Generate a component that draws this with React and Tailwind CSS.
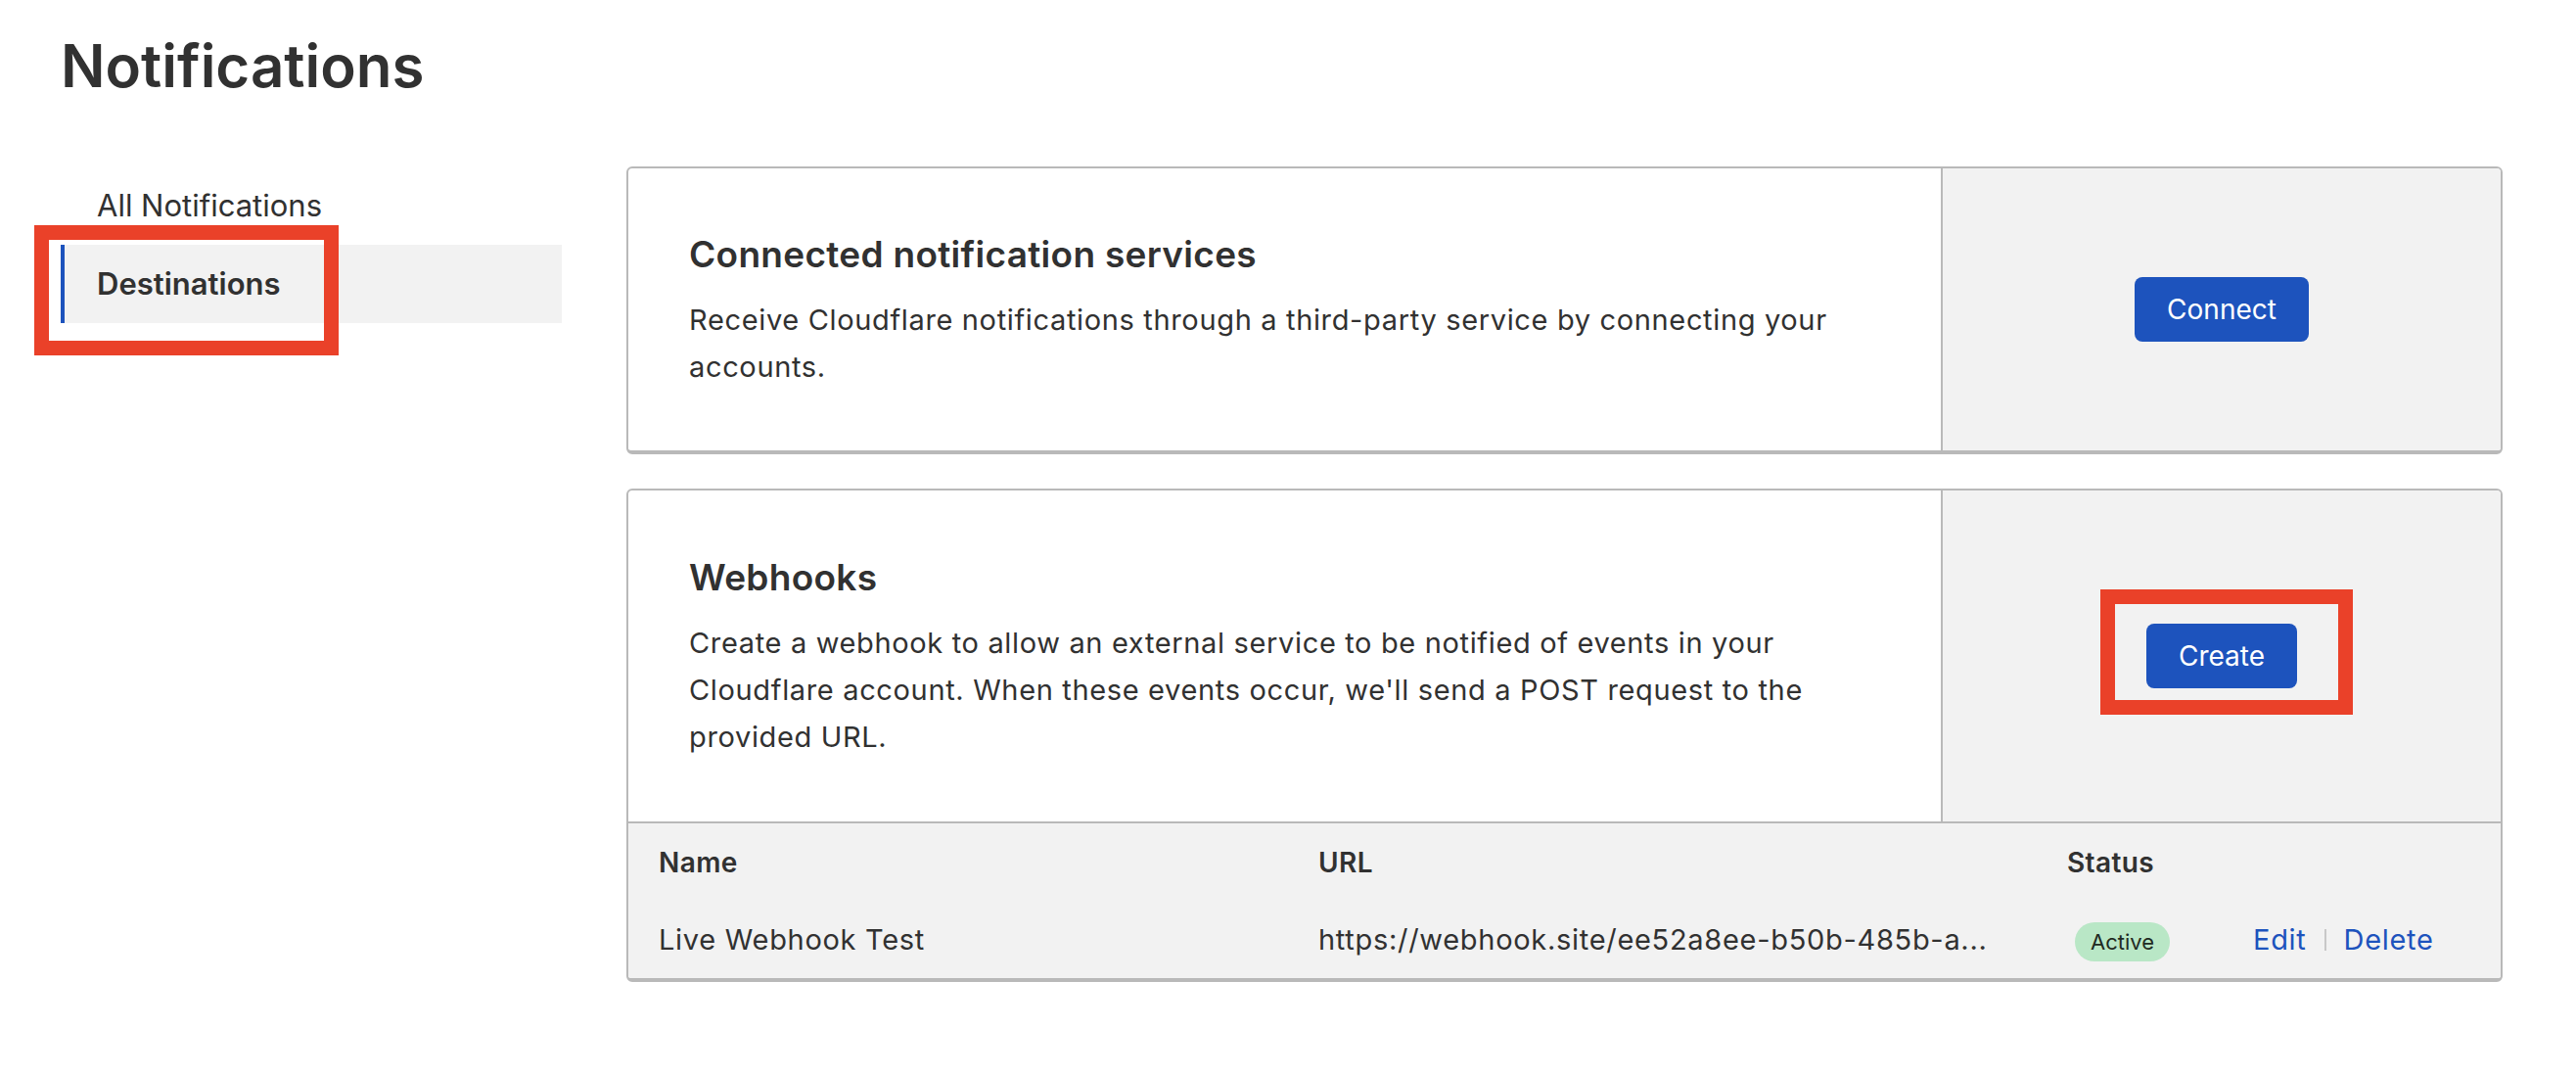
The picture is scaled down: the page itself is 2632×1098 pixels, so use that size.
import React from 'react';

const navItems = [
    { label: 'All Notifications', active: false },
    { label: 'Destinations', active: true },
];

const webhooks = [
    {
        name: 'Live Webhook Test',
        url: 'https://webhook.site/ee52a8ee-b50b-485b-a...',
        status: 'Active',
    },
];

const Card = ({ title, children, action, footer, rowHeight }) => (
    <div className="rounded-[6px] border-2 border-b-4 border-[#b9b9b9] overflow-hidden bg-white">
        <div className={`flex ${rowHeight}`}>
            <div className="flex-1 flex flex-col justify-center pt-[4px] pl-[62px] pr-[80px]">
                <h2 className="text-[37px] leading-[44px] tracking-[0.3px] font-semibold text-[#313131]">{title}</h2>
                <p className="mt-[21px] text-[29px] leading-[48px] tracking-[0.65px] text-[#313131]">{children}</p>
            </div>
            <div className="w-[572px] border-l-2 border-[#b9b9b9] bg-[#f2f2f2] flex items-center justify-center">
                {action}
            </div>
        </div>
        {footer}
    </div>
);

const Button = ({ children }) => (
    <button className="h-[66px] px-[33px] rounded-[8px] bg-[#1d53bd] text-white text-[28px] leading-none">
        {children}
    </button>
);

const App = () => {
    return (
        <div className="min-h-screen bg-white pl-[62px] pr-[75px] font-['Inter',sans-serif] text-[#313131]">
            <h1 className="pt-[36px] text-[60px] leading-[62px] font-semibold text-[#313131]">Notifications</h1>

            <div className="mt-[72px] flex gap-[66px]">
                {/* side nav */}
                <nav className="w-[512px] shrink-0">
                    {navItems.map((item) => (
                        <div key={item.label} className="relative">
                            <div
                                className={
                                    item.active
                                        ? 'h-[80px] flex items-center border-l-4 border-[#1d53bd] bg-[#f2f2f2] pl-[33px] text-[31px] font-semibold'
                                        : 'h-[80px] flex items-center pl-[37px] text-[31px]'
                                }
                            >
                                {item.label}
                            </div>
                            {item.active && (
                                <div className="absolute -left-[27px] -top-[20px] w-[311px] h-[133px] border-[15px] border-[#ea4129] pointer-events-none" />
                            )}
                        </div>
                    ))}
                </nav>

                <main className="flex-1 flex flex-col gap-[35px]">
                    <Card
                        title="Connected notification services"
                        rowHeight="h-[288px]"
                        action={<Button>Connect</Button>}
                    >
                        Receive Cloudflare notifications through a third-party service by connecting your accounts.
                    </Card>

                    <Card
                        title="Webhooks"
                        rowHeight="h-[338px]"
                        action={
                            <div className="relative">
                                <Button>Create</Button>
                                <div className="absolute -left-[47px] -top-[35px] w-[258px] h-[128px] border-[15px] border-[#ea4129] pointer-events-none" />
                            </div>
                        }
                        footer={
                            <div className="border-t-2 border-[#b9b9b9] bg-[#f2f2f2] pl-[31px] pr-[40px]">
                                <div className="h-[80px] flex items-center text-[28px] tracking-[0.4px] font-semibold">
                                    <div className="w-[674px]">Name</div>
                                    <div className="w-[765px]">URL</div>
                                    <div>Status</div>
                                </div>
                                {webhooks.map((hook) => (
                                    <div key={hook.name} className="h-[78px] flex items-center text-[29px] tracking-[0.7px]">
                                        <div className="w-[674px]">{hook.name}</div>
                                        <div className="w-[765px] whitespace-nowrap">{hook.url}</div>
                                        <div className="w-[190px] pl-[8px] tracking-normal">
                                            <span className="inline-flex h-[40px] items-center px-[16px] rounded-full bg-[#b9e7c6] text-[22px] text-[#1f2a22]">
                                                {hook.status}
                                            </span>
                                        </div>
                                        <div className="flex items-center text-[#1d53bd]">
                                            <span>Edit</span>
                                            <span className="mx-[18px] h-[22px] w-[2px] bg-[#c8c8c8]" />
                                            <span>Delete</span>
                                        </div>
                                    </div>
                                ))}
                            </div>
                        }
                    >
                        Create a webhook to allow an external service to be notified of events in your Cloudflare account. When these events occur, we'll send a POST request to the provided URL.
                    </Card>
                </main>
            </div>
        </div>
    );
};

export default App;
